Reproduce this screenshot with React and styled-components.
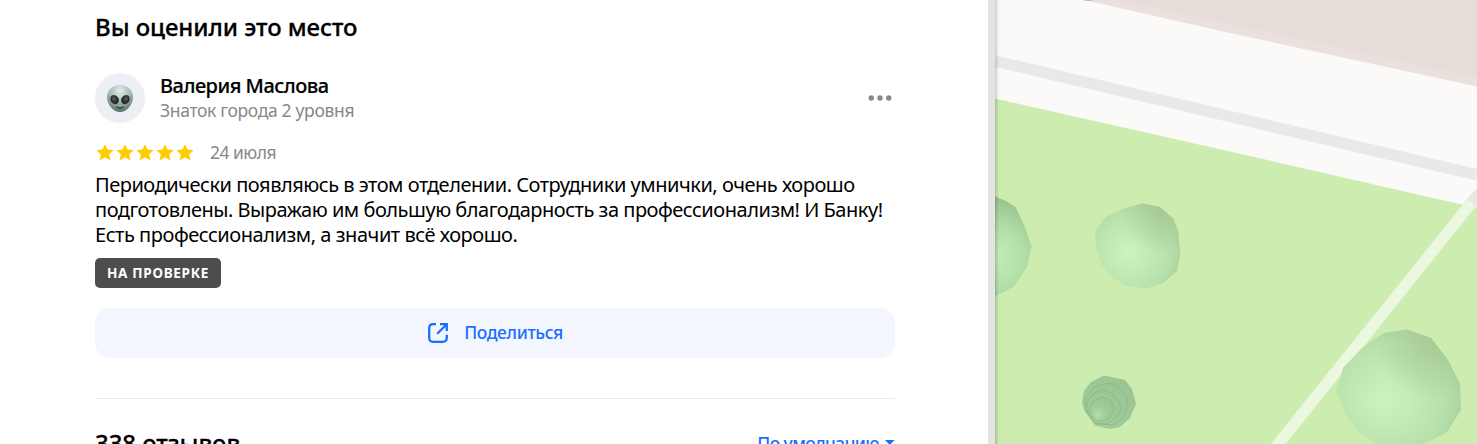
import React, { Component } from 'react'
import styled, { createGlobalStyle } from 'styled-components'

const lines = [
    { text: 'Периодически появляюсь в этом отделении. Сотрудники умнички, очень хорошо', track: -0.475 },
    { text: 'подготовлены. Выражаю им большую благодарность за профессионализм! И Банку!', track: -0.475 },
    { text: 'Есть профессионализм, а значит всё хорошо.', track: -0.455 },
]

class Review extends Component {
    render() {
        return (
            <ReviewWrapper>
                <Title>Вы оценили это место</Title>
                <Author>
                    <Avatar><Alien /></Avatar>
                    <AuthorInfo>
                        <Name>Валерия Маслова</Name>
                        <Level>Знаток города 2 уровня</Level>
                    </AuthorInfo>
                    <MenuButton aria-label="Ещё"><Dots /></MenuButton>
                </Author>
                <Rating>
                    <Stars>
                        {[1, 2, 3, 4, 5].map(n => <Star key={n} />)}
                    </Stars>
                    <ReviewDate>24 июля</ReviewDate>
                </Rating>
                <ReviewText>
                    {lines.map(line => (
                        <Line key={line.text} $track={line.track}>{line.text}</Line>
                    ))}
                </ReviewText>
                <Badge>НА ПРОВЕРКЕ</Badge>
                <ShareButton>
                    <ShareIcon />
                    <ShareLabel>Поделиться</ShareLabel>
                </ShareButton>
                <ListHeader>
                    <Title>338 отзывов</Title>
                    <Sort>
                        <SortLabel>По умолчанию</SortLabel>
                        <svg width="10" height="6" viewBox="0 0 10 6"><path d="M0 0h9.600L4.800 5z" fill="#196dff" /></svg>
                    </Sort>
                </ListHeader>
            </ReviewWrapper>
        )
    }
}

const Star = () => (
    <svg width="20" height="20" viewBox="0 0 20 20">
        <path d="M10 1.200l2.500 5.350 6.200.6-4.600 4.050 1.400 6.200L10 14.200l-5.500 3.200 1.400-6.200L1.300 7.150l6.200-.6z" fill="#fc0" />
    </svg>
)

const Dots = () => (
    <svg width="24" height="6" viewBox="0 0 24 6" fill="#888">
        <circle cx="3.300" cy="3" r="2.700" />
        <circle cx="12" cy="3" r="2.700" />
        <circle cx="20.700" cy="3" r="2.700" />
    </svg>
)

const ShareIcon = () => (
    <svg width="22" height="22" viewBox="0 0 22 22" fill="none" stroke="#196dff" strokeWidth="2.300">
        <path d="M9 2.200H6.200Q2.200 2.200 2.200 6.200v9.600q0 4 4 4h9.600q4 0 4-4v-3" />
        <path d="M10.200 11.800 19 3M13 2.200h6.800V9" />
    </svg>
)

const Alien = () => (
    <svg width="28" height="28" viewBox="0 0 28 28">
        <defs>
            <radialGradient id="skin" cx=".5" cy=".22" r=".8">
                <stop offset="0" stopColor="#e4f0ec" />
                <stop offset=".5" stopColor="#a5bbb5" />
                <stop offset="1" stopColor="#526d66" />
            </radialGradient>
            <radialGradient id="eye" cx=".5" cy=".4" r=".6">
                <stop offset="0" stopColor="#666" />
                <stop offset=".5" stopColor="#333" />
                <stop offset="1" stopColor="#222" />
            </radialGradient>
        </defs>
        <path d="M14 1C6.500 1 1 6 1 13.500 1 20 7 28 14 28s13-8 13-14.500C27 6 21.500 1 14 1z" fill="url(#skin)" />
        <ellipse cx="8.600" cy="15.600" rx="4" ry="4.900" transform="rotate(-35 8.600 15.600)" fill="url(#eye)" />
        <ellipse cx="19.400" cy="15.600" rx="4" ry="4.900" transform="rotate(35 19.400 15.600)" fill="url(#eye)" />
        <path d="M10.600 23q3.400 2.200 6.800 0" fill="none" stroke="#2d3d38" strokeWidth="1.200" strokeLinecap="round" />
    </svg>
)

const Tree = ({ d }) => (
    <g>
        <path d={d} fill="url(#crown)" />
        <path d={d} fill="url(#shade)" />
    </g>
)

// coordinates are in page pixels, the map starts at x = 995
const Map = () => (
    <MapView viewBox="995 0 482 444">
        <defs>
            <linearGradient id="edge">
                <stop offset="0" stopColor="#000" stopOpacity=".18" />
                <stop offset="1" stopColor="#000" stopOpacity="0" />
            </linearGradient>
            <radialGradient id="crown" cx=".4" cy=".58" r=".65">
                <stop offset="0" stopColor="#caf3bf" />
                <stop offset=".3" stopColor="#c3ecb6" />
                <stop offset=".75" stopColor="#b6dfaa" />
                <stop offset="1" stopColor="#a8cf9c" />
            </radialGradient>
            <radialGradient id="shade" cx=".78" cy=".12" r=".46">
                <stop offset="0" stopColor="#a6c894" stopOpacity=".8" />
                <stop offset=".4" stopColor="#a8cb96" stopOpacity=".55" />
                <stop offset="1" stopColor="#a8cb96" stopOpacity="0" />
            </radialGradient>
            <radialGradient id="sideCrown" gradientUnits="userSpaceOnUse" cx="993" cy="258" r="60">
                <stop offset="0" stopColor="#c3eeb6" />
                <stop offset=".5" stopColor="#b4dfa9" />
                <stop offset="1" stopColor="#98c48e" />
            </radialGradient>
            <radialGradient id="cone" cx=".35" cy=".72" r=".75">
                <stop offset="0" stopColor="#b3dfaa" />
                <stop offset=".4" stopColor="#a1cd9a" />
                <stop offset="1" stopColor="#9ac494" />
            </radialGradient>
        </defs>
        <rect x="995" width="482" height="444" fill="#fbfaf8" />
        <path d="M1084 0L1230 33 1477 86.500V0z" fill="#eae1de" />
        <path d="M1118 0L1230 24 1477 78V0z" fill="#e6ddd8" />
        <path d="M1084 0h8v1h-7z" fill="#b9b5f5" />
        <path d="M995 61L1230 116.500 1477 175" fill="none" stroke="#eae9e7" strokeWidth="11.500" />
        <path d="M995 98.500L1230 151.500 1477 208V444H995z" fill="#cdecb0" />
        <path d="M1463 203.500L1477 188v18l-4 4z" fill="#e8e7e4" />
        <path d="M1468.500 206.500L1275 448" fill="none" stroke="#ebf7df" strokeWidth="11.500" strokeLinecap="round" />
        <path d="M995 196.500L1006 201 1015.500 207 1025 227 1031.500 246 1027 267 1014 286 1006 291 995 296z" fill="url(#sideCrown)" />
        <Tree d="M1143 203.500L1160 207 1173.500 219 1178 231 1180.500 254 1177 271 1163 283 1147 288.500 1126 286 1114 278 1101.500 265 1096 248 1095 231 1106 217 1125 208z" />
        <Tree d="M1407 329.500L1431 338 1448 360 1460 384 1461 410 1447 432 1428 442 1410 450 1379 445 1360 433 1346 416 1336 391 1343 368 1363 347 1384 333z" />
        <path d="M1104 375.500L1125 380 1132 389 1136 404 1130 418 1120 427 1110 429 1095 426 1084 410 1082 403 1084 391 1091 382z" fill="url(#cone)" />
        <g fill="url(#cone)" stroke="#8ab688" strokeWidth=".8">
            <path d="M1108 383L1117 385 1126 395 1128 406 1122 419 1113 425 1096 424 1086 412 1085 399 1094 387z" />
            <path d="M1103 390L1112 393 1119 401 1121 410 1114 420 1106 424 1095 423 1087 411 1087 401 1094 393z" />
            <path d="M1102 397L1111 400 1114 408 1110 418 1102 422 1095 420 1089 411 1092 402z" />
        </g>
        <rect x="995" width="4" height="444" fill="url(#edge)" />
    </MapView>
)

export default class App extends Component {
    render() {
        return (
            <Page>
                <GlobalStyle />
                <Panel><Review /></Panel>
                <Divider />
                <Map />
            </Page>
        )
    }
}

const GlobalStyle = createGlobalStyle`
    body {
        margin: 0;
        overflow: hidden;
        background: #fff;
    }
    * {
        box-sizing: border-box;
    }
    svg {
        display: block;
        flex: none;
    }
`

const Page = styled.div`
    display: flex;
    height: 444px;
    overflow: hidden;
    font-family: "Noto Sans", sans-serif;
    color: #000;
    white-space: nowrap;
`

const Panel = styled.main`
    width: 988px;
    padding: 12px 93px 0 95px;
    flex: none;
`

const Divider = styled.div`
    width: 7px;
    flex: none;
    background: #e4e4e4;
`

const MapView = styled.svg`
    width: 482px;
    height: 444px;
`

const ReviewWrapper = styled.section`
    display: flex;
    flex-direction: column;
    align-items: flex-start;
    width: 800px;
`

const Title = styled.h2`
    margin: 0;
    font-size: 24px;
    line-height: 30px;
    font-weight: 500;
    letter-spacing: -.06px;
    -webkit-text-stroke: .3px currentColor;
`

const Author = styled.div`
    display: flex;
    align-items: center;
    width: 100%;
    height: 50px;
    margin-top: 31px;
`

const Avatar = styled.div`
    display: flex;
    align-items: center;
    justify-content: center;
    width: 50px;
    height: 50px;
    border-radius: 50%;
    background: #eeeff4;
`

const AuthorInfo = styled.div`
    flex: 1;
    margin-left: 15px;
`

const Name = styled.div`
    font-size: 20px;
    line-height: 25px;
    font-weight: 500;
    letter-spacing: -.5px;
    -webkit-text-stroke: .2px currentColor;
`

const Level = styled.div`
    font-size: 17.5px;
    line-height: 25px;
    letter-spacing: -.33px;
    color: #888;
`

const MenuButton = styled.button`
    padding: 0;
    margin-right: 3px;
    border: 0;
    background: none;
`

const Rating = styled.div`
    display: flex;
    align-items: center;
    height: 25px;
    margin-top: 17px;
`

const Stars = styled.div`
    display: flex;
`

const ReviewDate = styled.span`
    margin-left: 15px;
    padding-bottom: 2px;
    font-size: 17.5px;
    letter-spacing: -.55px;
    color: #888;
`

const ReviewText = styled.div`
    margin-top: 7px;
    font-size: 20px;
    line-height: 25px;
`

const Line = styled.div`
    letter-spacing: ${props => props.$track}px;
`

const Badge = styled.span`
    height: 30px;
    margin-top: 11px;
    padding: 0 12px;
    border-radius: 5px;
    background: #4d4d4d;
    color: #fff;
    font-size: 13.5px;
    line-height: 30px;
    font-weight: 700;
    letter-spacing: .7px;
`

const ShareButton = styled.button`
    display: flex;
    align-items: center;
    justify-content: center;
    gap: 15px;
    width: 100%;
    height: 50px;
    margin-top: 20px;
    border: 0;
    border-radius: 15px;
    background: #f3f6ff;
    font-family: inherit;
`

const ShareLabel = styled.span`
    padding-bottom: 2px;
    font-size: 17.5px;
    font-weight: 500;
    letter-spacing: -.38px;
    color: #196dff;
`

const ListHeader = styled.div`
    display: flex;
    justify-content: space-between;
    width: 100%;
    height: 80px;
    margin-top: 40px;
    padding-top: 29px;
    border-top: 1px solid #ebebeb;
`

const Sort = styled.div`
    display: flex;
    align-items: center;
    gap: 6px;
    height: 30px;
`

const SortLabel = styled.span`
    font-size: 17.5px;
    font-weight: 500;
    letter-spacing: -.6px;
    color: #196dff;
`
